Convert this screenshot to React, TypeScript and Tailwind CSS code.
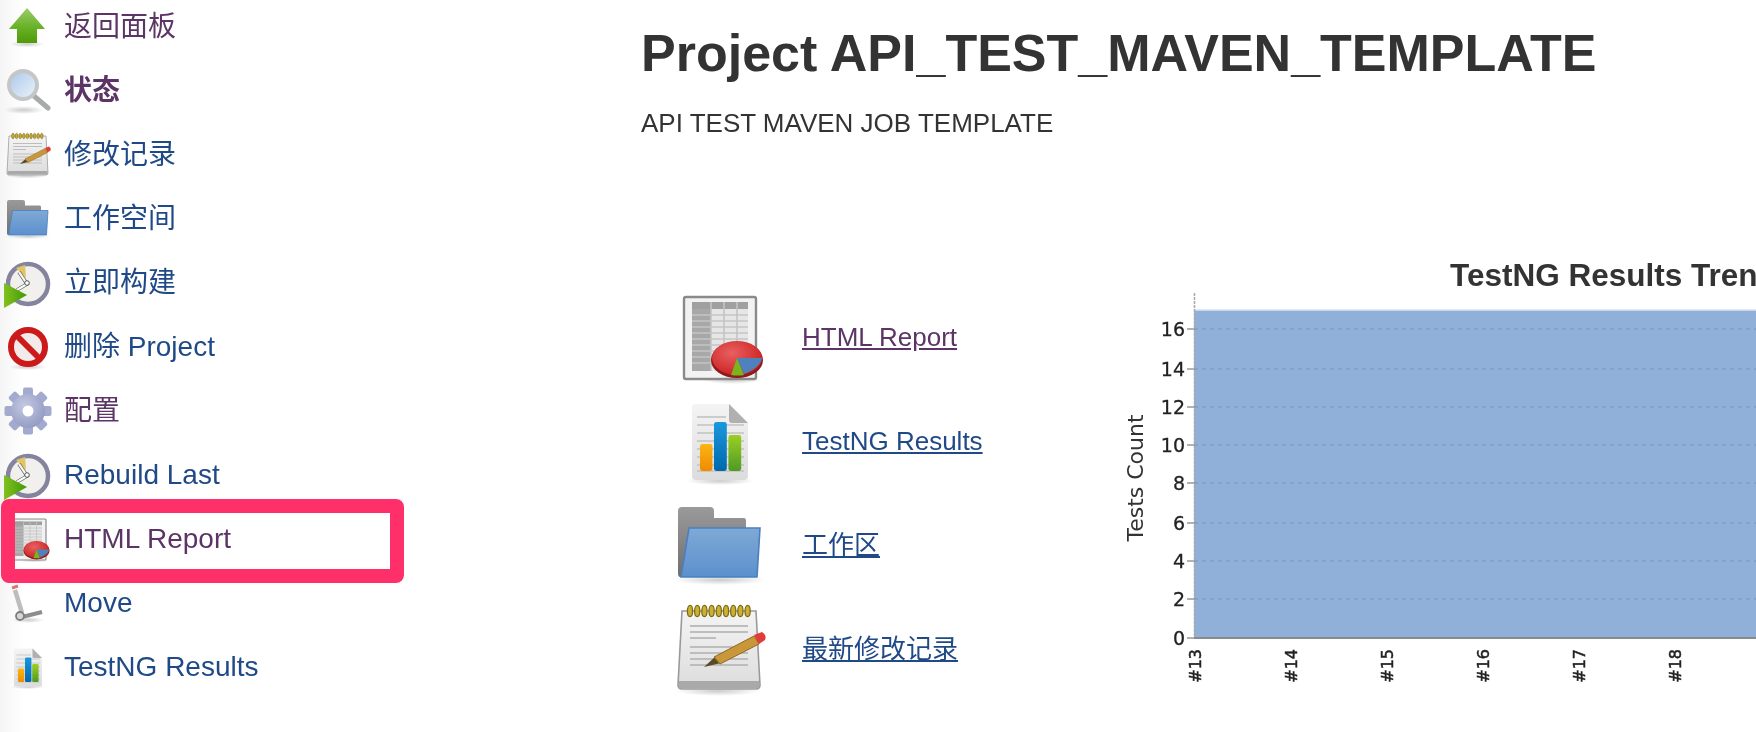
import React from "react";

const BLUE = "text-[#204a87]";
const PURPLE = "text-[#5c3566]";

const Defs = () => (
  <svg className="absolute h-0 w-0" aria-hidden="true">
    <defs>
      <linearGradient id="arrowFill" x1="0" y1="0" x2="0" y2="1">
        <stop offset="0" stopColor="#9ccb6c" />
        <stop offset="0.5" stopColor="#6cb52c" />
        <stop offset="1" stopColor="#4e9a06" />
      </linearGradient>
      <linearGradient id="lensFill" x1="0" y1="0" x2="1" y2="1">
        <stop offset="0" stopColor="#a9c6ea" />
        <stop offset="1" stopColor="#eef4fb" />
      </linearGradient>
      <linearGradient id="paperFill" x1="0" y1="0" x2="0" y2="1">
        <stop offset="0" stopColor="#f4f4f4" />
        <stop offset="1" stopColor="#dcdcdc" />
      </linearGradient>
      <linearGradient id="folderFront" x1="0" y1="0" x2="0" y2="1">
        <stop offset="0" stopColor="#7fa9d6" />
        <stop offset="1" stopColor="#5c90cd" />
      </linearGradient>
      <linearGradient id="folderBack" x1="0" y1="0" x2="0" y2="1">
        <stop offset="0" stopColor="#9a9a9a" />
        <stop offset="1" stopColor="#6f6f6f" />
      </linearGradient>
      <linearGradient id="orangeBar" x1="0" y1="0" x2="0" y2="1">
        <stop offset="0" stopColor="#fcb514" />
        <stop offset="1" stopColor="#f08a00" />
      </linearGradient>
      <linearGradient id="blueBar" x1="0" y1="0" x2="0" y2="1">
        <stop offset="0" stopColor="#1a98dc" />
        <stop offset="1" stopColor="#0068ad" />
      </linearGradient>
      <linearGradient id="greenBar" x1="0" y1="0" x2="0" y2="1">
        <stop offset="0" stopColor="#9ccf22" />
        <stop offset="1" stopColor="#4e9a26" />
      </linearGradient>
      <linearGradient id="playFill" x1="0" y1="0" x2="1" y2="0">
        <stop offset="0" stopColor="#82c11f" />
        <stop offset="1" stopColor="#3f9a05" />
      </linearGradient>
      <radialGradient id="pieFill" cx="0.4" cy="0.35" r="0.7">
        <stop offset="0" stopColor="#e86060" />
        <stop offset="1" stopColor="#cc1f1f" />
      </radialGradient>
      <radialGradient id="gearFill" cx="0.4" cy="0.35" r="0.8">
        <stop offset="0" stopColor="#c3c9e2" />
        <stop offset="1" stopColor="#8b93bd" />
      </radialGradient>
      <radialGradient id="softShadow">
        <stop offset="0" stopColor="#000" stopOpacity="0.2" />
        <stop offset="1" stopColor="#000" stopOpacity="0" />
      </radialGradient>
    </defs>
  </svg>
);

const Icon = ({ size, children }: { size: number; children: React.ReactNode }) => (
  <svg
    viewBox="0 0 48 48"
    width={size}
    height={size}
    className="shrink-0 overflow-visible blur-[0.7px]"
  >
    {children}
  </svg>
);

const Shadow = ({ cx, cy, rx, ry }: { cx: number; cy: number; rx: number; ry: number }) => (
  <ellipse cx={cx} cy={cy} rx={rx} ry={ry} fill="url(#softShadow)" />
);

const UpArrow = ({ size = 48 }: { size?: number }) => (
  <Icon size={size}>
    <Shadow cx={23} cy={41} rx={17} ry={3.5} />
    <path d="M23 5 L41 26 H33 V40 H13 V26 H5 Z" fill="url(#arrowFill)" />
  </Icon>
);

const Magnifier = ({ size = 48 }: { size?: number }) => (
  <Icon size={size}>
    <Shadow cx={20} cy={43} rx={20} ry={4} />
    <line x1={30} y1={29} x2={44} y2={41} stroke="#a9abab" strokeWidth={5} strokeLinecap="round" />
    <circle cx={19} cy={18} r={14} fill="url(#lensFill)" stroke="#c4c6c8" strokeWidth={4} />
  </Icon>
);

const Notepad = ({ size = 48 }: { size?: number }) => (
  <Icon size={size}>
    <Shadow cx={23} cy={45} rx={21} ry={2.5} />
    <path d="M5 5 H42 L44 42 Q44 44 42 44 H5 Q3 44 3 42 Z" fill="url(#paperFill)" stroke="#9a9a9a" strokeWidth={0.8} />
    <rect x={3.5} y={40} width={40} height={3.5} fill="#a9a9a9" />
    {[9, 12.6, 16.2, 19.8, 23.4, 27, 30.6, 34.2, 37.8].map((x) => (
      <ellipse key={x} cx={x} cy={5} rx={1.3} ry={2.8} fill="#c9b037" stroke="#7d6a10" strokeWidth={0.6} />
    ))}
    {[12.5, 15.5, 23, 26, 29, 32].map((y) => (
      <line key={y} x1={9} y1={y} x2={38} y2={y} stroke="#bdbdbd" strokeWidth={1} />
    ))}
    <line x1={9} y1={18.5} x2={22} y2={18.5} stroke="#bdbdbd" strokeWidth={1} />
    <path d="M16 33 L22 27.5 L24.5 31 Z" fill="#5c4a24" />
    <path d="M21 28 L41 17.5 L43.5 21.5 L24 31.5 Z" fill="#c9963a" stroke="#8f6a1e" strokeWidth={0.5} />
    <path d="M41 17 L45 15.5 Q47.5 17 46.5 19.5 L43.5 21.5 Z" fill="#e23b3b" />
  </Icon>
);

const Folder = ({ size = 48 }: { size?: number }) => (
  <Icon size={size}>
    <Shadow cx={24} cy={41.5} rx={23} ry={2.5} />
    <path d="M3 7 Q3 5 5 5 H19 Q21 5 21 7 V10.5 H36 Q37 10.5 37 12 V18 H9 L5 40 H4 Q3 40 3 38 Z" fill="url(#folderBack)" />
    <path d="M8.5 15.5 H44 L42.5 40 H4.5 Z" fill="url(#folderFront)" stroke="#4a7fc0" strokeWidth={0.8} />
  </Icon>
);

const Clock = ({ size = 48 }: { size?: number }) => (
  <Icon size={size}>
    <circle cx={24} cy={25} r={20} fill="#f1f0ec" stroke="#85849f" strokeWidth={4.5} />
    <path d="M12 9 L21 6 L22 19 Z" fill="#e0c560" />
    <path d="M15 13 L23 25 L13 31" fill="none" stroke="#6a6a6a" strokeWidth={3.6} />
    <path d="M15 13 L23 25 L13 31" fill="none" stroke="#fafafa" strokeWidth={2.2} />
    <circle cx={23} cy={24} r={2.3} fill="#fff" stroke="#555" />
    <path d="M0 24 L23 36 L0 49 Z" fill="url(#playFill)" />
  </Icon>
);

const Forbidden = ({ size = 48 }: { size?: number }) => (
  <Icon size={size}>
    <Shadow cx={24} cy={44} rx={19} ry={3} />
    <circle cx={24} cy={24} r={17} fill="#f3eaea" stroke="#cc1a1a" strokeWidth={6} />
    <line x1={12} y1={12} x2={36} y2={36} stroke="#cc1a1a" strokeWidth={6} />
  </Icon>
);

const Gear = ({ size = 48 }: { size?: number }) => (
  <Icon size={size}>
    {[0, 45, 90, 135].map((deg) => (
      <rect key={deg} x={19} y={0.5} width={10} height={47} rx={2} fill="#a3aad0" transform={`rotate(${deg} 24 24)`} />
    ))}
    <circle cx={24} cy={24} r={17} fill="url(#gearFill)" />
    <circle cx={24} cy={24} r={5.5} fill="#fff" />
  </Icon>
);

const ReportIcon = ({ size = 48 }: { size?: number }) => (
  <Icon size={size}>
    <Shadow cx={30} cy={45.5} rx={15} ry={2} />
    <rect x={6} y={4} width={36} height={41} rx={1} fill="#f2f2f2" stroke="#8a8a8a" strokeWidth={1.2} />
    <rect x={10} y={6.5} width={28} height={34.5} fill="#e6e6e6" />
    <rect x={10} y={6.5} width={9.5} height={34.5} fill="#a8a8a8" />
    <rect x={10} y={6.5} width={28} height={3.5} fill="#a0a0a0" />
    {[13, 16, 19, 22, 25, 28, 31, 34, 37].map((y) => (
      <line key={y} x1={10} y1={y} x2={38} y2={y} stroke="#c4c4c4" strokeWidth={0.8} />
    ))}
    {[19.5, 26, 32.5].map((x) => (
      <line key={x} x1={x} y1={6.5} x2={x} y2={41} stroke="#c4c4c4" strokeWidth={0.8} />
    ))}
    <ellipse cx={32.5} cy={35.5} rx={13} ry={9} fill="#8f1a1a" />
    <ellipse cx={32.5} cy={34.5} rx={12.5} ry={8.5} fill="url(#pieFill)" />
    <path d="M32.5 34.5 L29.5 43 Q33 43.5 36 43 Z" fill="#7ab51d" />
    <path d="M32.5 34.5 L45 34.5 Q44.5 39 36 42.5 Z" fill="#4f81bd" />
  </Icon>
);

const MoveIcon = ({ size = 48 }: { size?: number }) => (
  <Icon size={size}>
    <Shadow cx={24} cy={41} rx={16} ry={3} />
    <line x1={8} y1={9} x2={14} y2={7} stroke="#d9776f" strokeWidth={3} />
    <line x1={11} y1={11} x2={18} y2={34} stroke="#bdbdbd" strokeWidth={4.5} />
    <line x1={18} y1={38} x2={38} y2={33} stroke="#8d8d8d" strokeWidth={4} />
    <circle cx={16} cy={37} r={4} fill="#d5d5d5" stroke="#7d7d7d" strokeWidth={1.8} />
  </Icon>
);

const ResultsIcon = ({ size = 48 }: { size?: number }) => (
  <Icon size={size}>
    <Shadow cx={24} cy={44} rx={17} ry={2} />
    <path d="M12 5.5 H28.5 L38 15 V41.5 Q38 43.5 36 43.5 H12 Q10 43.5 10 41.5 V7.5 Q10 5.5 12 5.5 Z" fill="url(#paperFill)" />
    <path d="M28.5 5.5 L38 15 H30 Q28.5 15 28.5 13.5 Z" fill="#b0b0b0" />
    {[12, 16, 20, 24, 28, 32, 36, 39].map((y) => (
      <line key={y} x1={12.5} y1={y} x2={y < 15 ? 27 : 36} y2={y} stroke="#c2c2c2" strokeWidth={0.8} />
    ))}
    <rect x={14} y={25.5} width={6.2} height={13.5} rx={1.2} fill="url(#orangeBar)" />
    <rect x={21} y={14.5} width={6.4} height={24.5} rx={1.2} fill="url(#blueBar)" />
    <rect x={28.2} y={21} width={6.4} height={18} rx={1.2} fill="url(#greenBar)" />
  </Icon>
);

const sideItems = [
  { label: "返回面板", color: PURPLE, icon: <UpArrow /> },
  { label: "状态", color: PURPLE, bold: true, icon: <Magnifier /> },
  { label: "修改记录", color: BLUE, icon: <Notepad /> },
  { label: "工作空间", color: BLUE, icon: <Folder /> },
  { label: "立即构建", color: BLUE, icon: <Clock /> },
  { label: "删除 Project", color: BLUE, icon: <Forbidden /> },
  { label: "配置", color: PURPLE, icon: <Gear /> },
  { label: "Rebuild Last", color: BLUE, icon: <Clock /> },
  { label: "HTML Report", color: PURPLE, icon: <ReportIcon /> },
  { label: "Move", color: BLUE, icon: <MoveIcon /> },
  { label: "TestNG Results", color: BLUE, icon: <ResultsIcon /> },
];

const mainLinks = [
  { label: "HTML Report", color: PURPLE, icon: <ReportIcon size={96} /> },
  { label: "TestNG Results", color: BLUE, icon: <ResultsIcon size={96} /> },
  { label: "工作区", color: BLUE, icon: <Folder size={96} /> },
  { label: "最新修改记录", color: BLUE, icon: <Notepad size={96} /> },
];

// y position of each value on the picture, taken relative to the svg top
const yTicks = [
  { v: 16, y: 79 },
  { v: 14, y: 119 },
  { v: 12, y: 157 },
  { v: 10, y: 195 },
  { v: 8, y: 233 },
  { v: 6, y: 273 },
  { v: 4, y: 311 },
  { v: 2, y: 349 },
  { v: 0, y: 388 },
];
const xTicks = [13, 14, 15, 16, 17, 18];

const TrendChart = () => (
  <svg width={646} height={470} className="shrink-0 blur-[0.6px]">
    <text x={340} y={36} fontSize={31.5} fontWeight={700} fill="#333" className="font-['Liberation_Sans',sans-serif]">
      TestNG Results Trend
    </text>
    <rect x={84} y={60} width={562} height={328} fill="#90b0d9" />
    <line x1={84} y1={60} x2={646} y2={60} stroke="#d9e3f0" strokeWidth={1.5} />
    <line x1={84.5} y1={43} x2={84.5} y2={388} stroke="#a9a9a9" strokeWidth={1.5} strokeDasharray="3 1" />
    <line x1={84} y1={388} x2={646} y2={388} stroke="#8a8a8a" strokeWidth={2} />
    {yTicks.map((t) => (
      <g key={t.v}>
        {t.v > 0 && (
          <line x1={84} y1={t.y} x2={646} y2={t.y} stroke="#7495bf" strokeWidth={1} strokeDasharray="4 4" />
        )}
        <line x1={77} y1={t.y} x2={84} y2={t.y} stroke="#999" strokeWidth={1.5} />
        <text
          x={75}
          y={t.y + 7}
          fontSize={19}
          textAnchor="end"
          fill="#222"
          stroke="#222"
          strokeWidth={0.3}
          className="font-['DejaVu_Sans',sans-serif]"
        >
          {t.v}
        </text>
      </g>
    ))}
    <text
      transform="translate(33 228) rotate(-90)"
      fontSize={22}
      textAnchor="middle"
      fill="#333"
      className="font-['DejaVu_Sans',sans-serif]"
    >
      Tests Count
    </text>
    {xTicks.map((n, i) => (
      <text
        key={n}
        transform={`translate(${91 + i * 96} 399) rotate(-90)`}
        fontSize={16}
        textAnchor="end"
        fill="#222"
        stroke="#222"
        strokeWidth={0.5}
        className="font-['DejaVu_Sans',sans-serif]"
      >
        {"#" + n}
      </text>
    ))}
  </svg>
);

export default function App() {
  return (
    <div className="relative flex h-[732px] w-[1756px] overflow-hidden bg-white font-['Liberation_Sans','Noto_Sans_CJK_SC',sans-serif]">
      <Defs />
      <aside className="w-[641px] shrink-0 bg-linear-to-r from-[#f5f5f5] to-white to-[24px]">
        <div className="-mt-[5px] flex flex-col pl-1">
          {sideItems.map((item) => (
            <a key={item.label} href="#" className="flex h-16 items-center gap-3">
              {item.icon}
              <span className={`text-[28px] leading-none blur-[0.3px] ${item.color} ${item.bold ? "font-bold" : ""}`}>
                {item.label}
              </span>
            </a>
          ))}
        </div>
      </aside>

      <main className="flex min-w-0 flex-1 flex-col text-[#333]">
        <h1 className="mt-[21px] h-[64px] text-[52px] leading-[64px] font-bold whitespace-nowrap blur-[0.3px]">
          Project API_TEST_MAVEN_TEMPLATE
        </h1>
        <p className="mt-[23px] h-[30px] text-[26px] leading-[30px] blur-[0.3px]">API TEST MAVEN JOB TEMPLATE</p>
        <div className="mt-[112px] flex items-start">
          <div className="flex w-[469px] shrink-0 flex-col pt-[35px] pl-[31px]">
            {mainLinks.map((link) => (
              <div key={link.label} className="flex h-[104px] items-center gap-[34px]">
                {link.icon}
                <a href="#" className={`text-[26px] leading-none underline blur-[0.3px] ${link.color}`}>
                  {link.label}
                </a>
              </div>
            ))}
          </div>
          <TrendChart />
        </div>
      </main>

      <div className="pointer-events-none absolute top-[499px] left-px h-[84px] w-[403px] rounded-lg border-[14px] border-[#ff3069]" />
    </div>
  );
}
